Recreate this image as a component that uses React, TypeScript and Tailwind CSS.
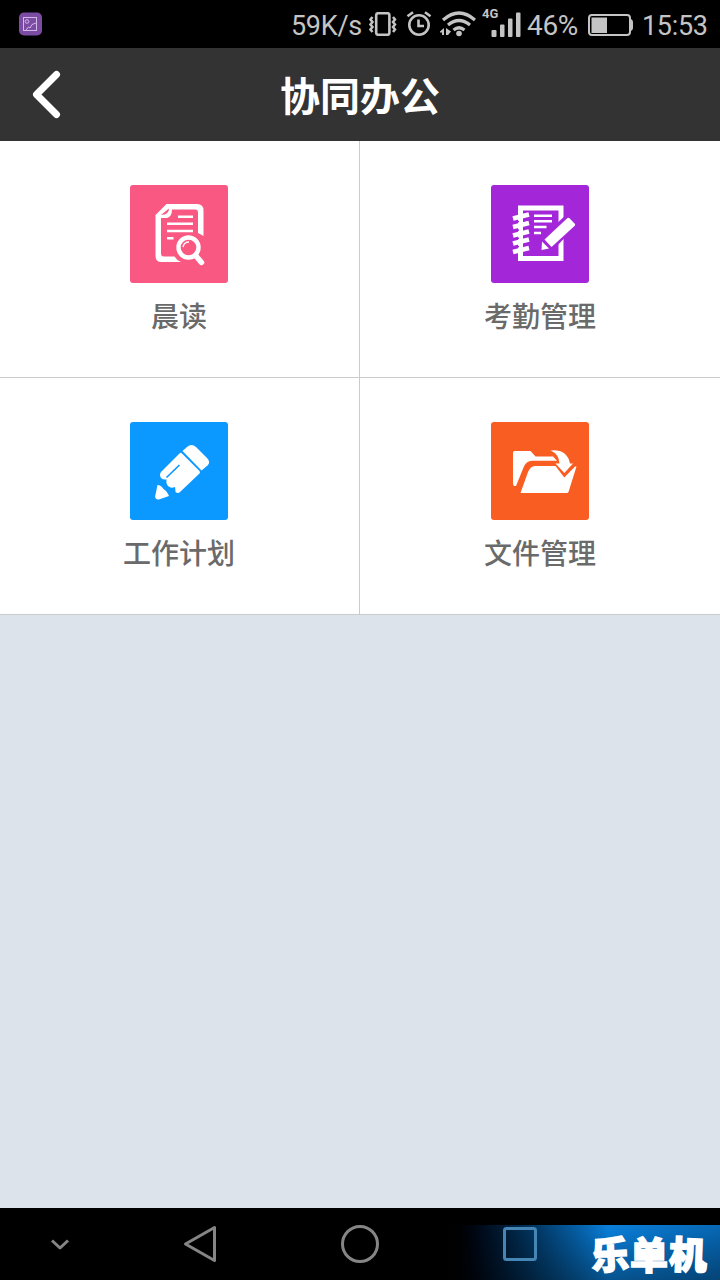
import type { ReactNode } from "react";

function MorningReadIcon() {
  return (
    <svg className="w-[98px] h-[98px]" viewBox="0 0 98 98" fill="none">
      <path
        d="M73.500 51V25.500Q73.500 19 67 19H36.500L25.500 30V71Q25.500 77 31.500 77H51Q46.500 75 44.500 71.500H34Q31 71.500 31 68.500V33H37Q42 32 42 24.500H65Q68 24.500 68 27.500V48Z"
        fill="white"
      />
      <path d="M31 30L39 23.500Q39 30 31 30Z" fill="#fb5881" />
      <path
        d="M48 31.700H63M37 38.700H63M37 46H63M37 53.300H43.500"
        stroke="white"
        strokeWidth="2.600"
      />
      <circle cx="58.500" cy="62.500" r="14" fill="#fb5881" />
      <circle cx="58.500" cy="62.500" r="10" stroke="white" strokeWidth="4.400" />
      <path d="M53 62Q54 57 59 57" stroke="white" strokeWidth="1.300" />
      <path
        d="M66 71L71.500 77.500"
        stroke="white"
        strokeWidth="5.500"
        strokeLinecap="round"
      />
    </svg>
  );
}

function AttendanceIcon() {
  return (
    <svg className="w-[98px] h-[98px]" viewBox="0 0 98 98" fill="none">
      <path d="M29.500 23H70V73.500H29.500Z" stroke="white" strokeWidth="5" />
      <path
        d="M22 33.500L38 29.500M22 42L38 38M22 50.500L38 46.500M22 58.500L38 54.500M22 67L38 63"
        stroke="white"
        strokeWidth="4.600"
      />
      <path
        d="M27 36.800L37 34.300M27 45.200L37 42.700M27 53.500L37 51M27 61.800L37 59.300"
        stroke="#a327d9"
        strokeWidth="1.600"
      />
      <path d="M30 26V74" stroke="white" strokeWidth="4" />
      <path
        d="M43 30.700H61M43 36.300H61M43 42H55.500M43 48H50"
        stroke="white"
        strokeWidth="2.600"
      />
      <path d="M51 52L76 29L87 39L62 65L48 68Z" fill="#a327d9" />
      <path
        d="M76.500 33Q77.500 32.300 78.500 33.300L84 39Q84.500 40 83.500 41L60.500 62L53.500 54.500Z"
        fill="white"
      />
      <path d="M51 56.500L58 63.500L50.500 65Z" fill="white" />
    </svg>
  );
}

function WorkPlanIcon() {
  return (
    <svg className="w-[98px] h-[98px]" viewBox="0 0 98 98" fill="none">
      <path
        d="M52.500 29L57 25Q61.500 21 66 25L77 36Q81 40 77.500 43.500L71.500 48.500Z"
        fill="white"
      />
      <path
        d="M50 31Q51 30.500 52 31.500L69.500 49Q70.500 50 69.500 51.500L50 70Q48 72 45.500 70Q45.500 67 45 65Q41 67 38 64Q36 62 36.500 57.500Q33 58 31 56Q29 53 31 50Z"
        fill="white"
      />
      <path d="M36.500 55.500L49.500 43" stroke="#0b98ff" strokeWidth="1.700" />
      <path
        d="M27.500 63Q31 63 33.500 67Q37 69 39 74L29 77.500Q26 78 25 75Z"
        fill="white"
      />
    </svg>
  );
}

function FilesIcon() {
  return (
    <svg className="w-[98px] h-[98px]" viewBox="0 0 98 98" fill="none">
      <path
        d="M22 30.500Q22 29 23.500 29H39.500L44.500 34.500H62L66 38.700H41Q35 39 32.500 45.500L25 64H23Q22 63 22 61Z"
        fill="white"
      />
      <path
        d="M29.500 71L37 50Q39.500 44 44 44H64.500L73.300 55.500L84 44.500H85.500L77.500 70Q77 71 76 71Z"
        fill="white"
      />
      <path
        d="M59.500 28.500Q76 27 79 41.500H82L73.300 51L64.500 41.500H68.500Q68 32 59.500 28.500Z"
        fill="white"
      />
    </svg>
  );
}

type tileProps = {
  label: string;
  color: string;
  border: string;
  icon: ReactNode;
};
function Tile(props: tileProps) {
  return (
    <button
      className={`flex flex-col items-center pt-11 border-b border-[#cbcbcb] bg-white ${props.border}`}
    >
      <span className={`size-[98px] rounded-[3px] ${props.color}`}>
        {props.icon}
      </span>
      <span className="mt-[11px] text-[28px] leading-[42px] font-medium text-[#6a6a6a]">
        {props.label}
      </span>
    </button>
  );
}

function StatusBar() {
  return (
    <div className="h-12 bg-black flex items-center text-[#c4c4c4] font-['Roboto',sans-serif] text-[27px] leading-none">
      <svg className="ml-[18px] size-6" viewBox="0 0 24 24" fill="none">
        <rect x="1" y="0.500" width="23" height="23" rx="5" fill="#7c4ba4" />
        <g stroke="#d2b8e4" strokeWidth="1">
          <rect x="5.500" y="5.500" width="13" height="13" />
          <circle cx="9" cy="9.500" r="1.800" />
          <path d="M8 18L10.500 15L12 16Q13 11.500 18 11" />
        </g>
      </svg>
      <span className="ml-[249px] w-[71px] mt-[4px] tracking-[-0.300px]">59K/s</span>
      <svg
        className="ml-[7px] w-7 h-6"
        viewBox="0 0 28 24"
        fill="none"
        stroke="currentColor"
      >
        <rect x="7.200" y="1.200" width="13.200" height="21.600" rx="2" strokeWidth="2.600" />
        <path
          d="M3.500 5L1.500 7.500L3.500 10L1.500 12.500L3.500 15L1.500 17.500L3.500 20M24 5L26 7.500L24 10L26 12.500L24 15L26 17.500L24 20"
          strokeWidth="2.500"
        />
      </svg>
      <svg
        className="ml-[9px] w-[26px] h-[26px]"
        viewBox="0 0 26 26"
        fill="none"
        stroke="currentColor"
        strokeWidth="2.600"
      >
        <circle cx="13" cy="14" r="9.700" />
        <path d="M12.500 8.500V15H18M1.500 5.300L7 1.200M24.500 5.300L19 1.200" />
      </svg>
      <svg
        className="ml-[8px] w-9 h-[26px]"
        viewBox="0 0 36 26"
        fill="none"
        stroke="currentColor"
        strokeWidth="3.200"
      >
        <path d="M3 9Q19 -5 35 9M8 14Q19 5 30 14M13.500 19Q19 14.500 24.500 19" />
        <circle cx="19" cy="22.500" r="2.800" fill="currentColor" stroke="none" />
        <path
          d="M0 20.500L4 17V24H2V21.500H0ZM6 17L11 20.500L8 24H6Z"
          fill="currentColor"
          stroke="none"
        />
      </svg>
      <div className="relative ml-[6px] w-[39px] h-8">
        <span className="absolute left-0 -top-[1px] text-[13px] font-bold">4G</span>
        <svg className="w-[39px] h-8" viewBox="0 0 39 32" fill="currentColor">
          <rect x="9.500" y="22" width="5" height="7" rx="1" />
          <rect x="18" y="16.500" width="4.500" height="12.500" rx="1" />
          <rect x="26" y="10.500" width="4.500" height="18.500" rx="1" />
          <rect x="34" y="4.500" width="4.500" height="24.500" rx="1" />
        </svg>
      </div>
      <span className="ml-[6px] w-[54px] mt-[4px] text-[28px] tracking-[-0.300px]">46%</span>
      <svg className="ml-[6px] w-[47px] h-6" viewBox="0 0 47 24" fill="none">
        <rect
          x="2"
          y="3"
          width="41"
          height="20"
          rx="3"
          stroke="currentColor"
          strokeWidth="2"
        />
        <rect x="4.500" y="5.500" width="15.500" height="15.500" fill="currentColor" />
        <path d="M43 7H44Q46 8 46 10V16Q46 18 44 19H43Z" fill="currentColor" />
      </svg>
      <span className="ml-[8px] mt-[4px] tracking-[-0.300px]">15:53</span>
    </div>
  );
}

function NavBar() {
  return (
    <div className="relative h-[72px] bg-black overflow-hidden">
      <svg
        className="w-full h-full"
        viewBox="0 0 720 72"
        fill="none"
        stroke="#858585"
        strokeWidth="3"
        strokeLinejoin="round"
      >
        <path d="M52 32.500L60 40L68 32.500" />
        <path d="M214.500 19.500V52.500L185.500 36Z" />
        <circle cx="360" cy="36" r="17.500" />
      </svg>
      <div className="absolute right-0 bottom-0 w-[280px] h-[55px] bg-linear-to-r from-black via-[#0a80dc] via-60% to-[#0768b5]">
        <div className="w-full h-full flex items-start bg-linear-to-b from-transparent to-black/35">
          <svg className="ml-[62px] mt-px size-9" viewBox="0 0 36 36" fill="none">
            <rect
              x="2.500"
              y="2.500"
              width="31"
              height="31"
              rx="2"
              stroke="#4686b5"
              strokeWidth="3"
            />
          </svg>
          <span className="ml-[53px] mt-[9px] flex text-[38px] leading-none font-black text-white [-webkit-text-stroke:1.5px_white]">
            <span className="-rotate-3">乐</span>
            <span className="ml-px">单</span>
            <span className="ml-px rotate-2">机</span>
          </span>
        </div>
      </div>
    </div>
  );
}

export default function App() {
  return (
    <div className="w-[720px] h-[1280px] flex flex-col bg-[#dce3ea] font-['Noto_Sans_CJK_SC',sans-serif]">
      <StatusBar />
      <header className="h-[93px] bg-[#333] flex items-center justify-between">
        <button className="w-24 pl-8">
          <svg
            className="w-[30px] h-[50px]"
            viewBox="0 0 30 50"
            fill="none"
            stroke="white"
            strokeWidth="7"
            strokeLinecap="round"
            strokeLinejoin="round"
          >
            <path d="M24.500 4.500L4.500 24.500L24.500 44.500" />
          </svg>
        </button>
        <h1 className="pb-[2px] text-[40px] leading-none font-bold text-white">
          协同办公
        </h1>
        <div className="w-24" />
      </header>
      <main className="grid grid-cols-2 auto-rows-[237px]">
        <Tile
          label="晨读"
          color="bg-[#f95883]"
          border="border-r pr-px"
          icon={<MorningReadIcon />}
        />
        <Tile
          label="考勤管理"
          color="bg-[#a327d9]"
          border=""
          icon={<AttendanceIcon />}
        />
        <Tile
          label="工作计划"
          color="bg-[#0b98ff]"
          border="border-r pr-px"
          icon={<WorkPlanIcon />}
        />
        <Tile
          label="文件管理"
          color="bg-[#fa5d22]"
          border=""
          icon={<FilesIcon />}
        />
      </main>
      <div className="flex-1" />
      <NavBar />
    </div>
  );
}
